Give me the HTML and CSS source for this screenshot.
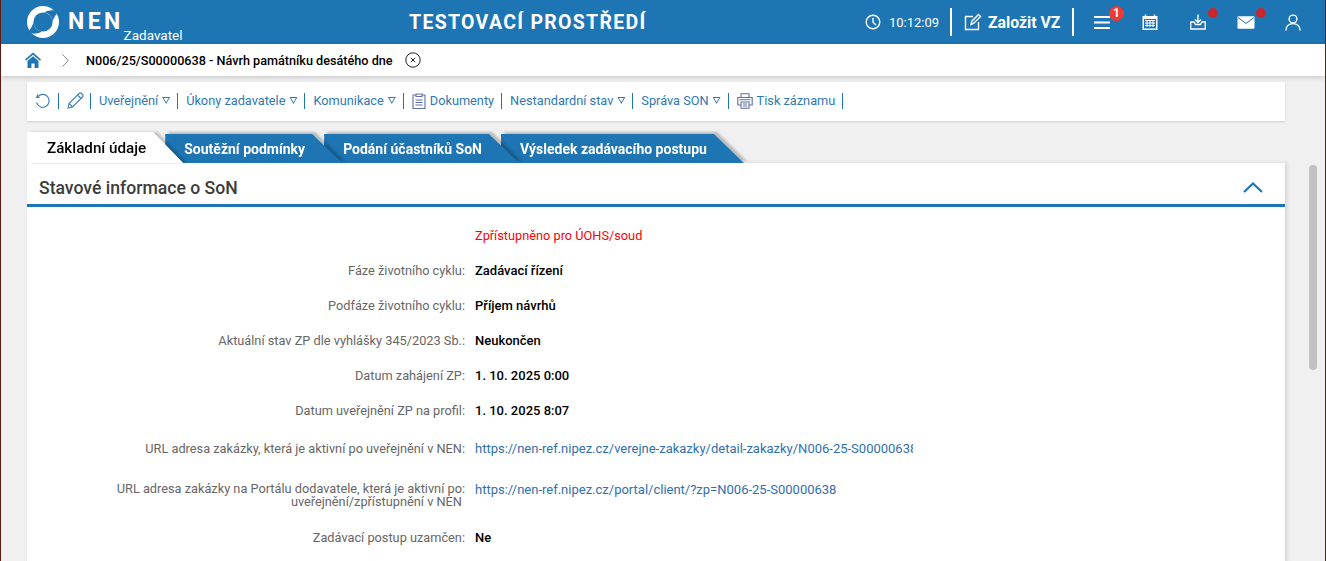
FILE: index.html
```html
<!DOCTYPE html>
<html lang="cs">
<head>
    <meta charset="utf-8"/>
    <title>NEN - Zadavatel</title>
    <link rel="stylesheet" href="styles.css">
</head>
<body>

<header class="top_bar">
    <div class="brand">
        <svg class="brand__logo" viewBox="0 0 32 32" width="32" height="32">
            <circle cx="16" cy="16" r="16" fill="#fff"/>
            <circle cx="16" cy="16" r="9.6" fill="#1e75b4"/>
            <path d="M31 6 C27 3.5 22 4 17 6.6 C22 7 25.6 11 25.4 16 C26.5 12 28.5 9 31 6Z" fill="#1e75b4"/>
            <path d="M1 26 C5 28.5 10 28 15 25.4 C10 25 6.4 21 6.6 16 C5.5 20 3.5 23 1 26Z" fill="#1e75b4"/>
        </svg>
        <span class="brand__name">NEN</span>
        <span class="brand__role">Zadavatel</span>
    </div>
    <div class="top_bar__title">TESTOVACÍ PROSTŘEDÍ</div>
    <div class="top_bar__right">
        <svg class="icon clock" viewBox="0 0 16 16" width="16" height="16"><circle cx="8" cy="8" r="6.8"/><path d="M8 3.8V8.2L11 11"/></svg>
        <span class="time">10:12:09</span>
        <span class="top_sep"></span>
        <svg class="icon create" viewBox="0 0 18 18" width="18" height="18"><path d="M9 3.5H1.5V16.5H14.5V9"/><path d="M7 11.5L7.8 8.2L14.5 1.5L16.5 3.5L9.8 10.2Z"/></svg>
        <span class="create_label">Založit VZ</span>
        <span class="top_sep top_sep--second"></span>
        <span class="menu_btn">
            <svg viewBox="0 0 16 13" width="16" height="13"><path d="M0 1H16M0 6.5H16M0 12H16" stroke="#fff" stroke-width="2"/></svg>
            <span class="badge">1</span>
        </span>
        <svg class="calendar" viewBox="0 0 16 16" width="16" height="16">
            <path d="M0.5 2H15.5V16H0.5Z" fill="#fff"/>
            <path d="M3.5 0.5V3M12.5 0.5V3" stroke="#fff" stroke-width="1.5"/>
            <path d="M2 5H14V14.5H2Z" fill="#1e75b4"/>
            <path d="M3 6.5H13M3 9H13M3 11.5H13M5 6V13M8 6V13M11 6V13" stroke="#fff" stroke-width="1"/>
        </svg>
        <span class="dot_btn dot_btn--inbox">
            <svg class="icon" viewBox="0 0 16 16" width="16" height="16"><path d="M8 0.5V8M5 5.5L8 8.5L11 5.5" stroke-width="1.4"/><path d="M4 8H0.8V15H15.2V8H12L10.5 10.5H5.5Z" stroke-width="1.3"/></svg>
            <span class="dot"></span>
        </span>
        <span class="dot_btn dot_btn--mail">
            <svg viewBox="0 0 18 13" width="18" height="13"><path d="M0.5 1.2C0.5 0.6 1 0.2 1.5 0.2H16.5C17 0.2 17.5 0.6 17.5 1.2V11.8C17.5 12.4 17 12.8 16.5 12.8H1.5C1 12.8 0.5 12.4 0.5 11.8Z" fill="#fff"/><path d="M1 1.5L9 7.5L17 1.5" fill="none" stroke="#1e75b4" stroke-width="1"/></svg>
            <span class="dot"></span>
        </span>
        <svg class="icon user" viewBox="0 0 16 17" width="16" height="17"><circle cx="8" cy="5" r="3.9"/><path d="M0.8 16.5C1.2 12 4 9.6 8 9.6C12 9.6 14.8 12 15.2 16.5"/></svg>
    </div>
</header>

<nav class="breadcrumb">
    <svg class="breadcrumb__home" viewBox="0 0 16 16" width="16" height="16">
        <path d="M8 0.5L0 7.6L1 8.8L8 2.8L15 8.8L16 7.6Z" fill="#1e75b4"/>
        <path d="M2.5 9L8 4.3L13.5 9V16H9.6V11.5H6.4V16H2.5Z" fill="#1e75b4"/>
    </svg>
    <svg class="breadcrumb__chevron" viewBox="0 0 7 13" width="7" height="13"><path d="M0.5 0.5L6.3 6.5L0.5 12.5" fill="none" stroke="#888" stroke-width="1"/></svg>
    <span class="breadcrumb__text">N006/25/S00000638 - Návrh památníku desátého dne</span>
    <svg class="breadcrumb__close" viewBox="0 0 16 16" width="16" height="16"><circle cx="8" cy="8" r="7.2" fill="none" stroke="#222" stroke-width="1"/><path d="M5.8 5.8L10.2 10.2M10.2 5.8L5.8 10.2" stroke="#222" stroke-width="1"/></svg>
</nav>

<div class="page">
    <div class="content">
        <div class="toolbar">
            <span class="toolbar__item">
                <svg class="tool_icon" viewBox="0 0 16 16" width="16" height="16"><path d="M2.6 4A6.4 6.4 0 1 1 1.6 9.5"/><path d="M0.8 4.4H4.6M2.4 1.2V4.6"/></svg>
            </span>
            <span class="toolbar__item toolbar__item--pen">
                <svg class="tool_icon" viewBox="0 0 17 17" width="17" height="17"><path d="M1 16L2 11.5L12 1.5C12.8 0.8 13.8 0.8 14.6 1.5L15.5 2.4C16.2 3.2 16.2 4.2 15.5 5L5.5 15Z"/><path d="M10.5 3L14 6.5M2 11.5L5.5 15"/></svg>
            </span>
            <span class="toolbar__item">Uveřejnění <i class="caret"></i></span>
            <span class="toolbar__item">Úkony zadavatele <i class="caret"></i></span>
            <span class="toolbar__item">Komunikace <i class="caret"></i></span>
            <span class="toolbar__item">
                <svg class="tool_icon tool_icon--doc" viewBox="0 0 14 16" width="14" height="16"><path d="M4 2H1V15.5H13V2H10"/><path d="M4 1H10V3.5H4ZM3.5 7H10.5M3.5 9.5H10.5M3.5 12H10.5"/></svg>
                Dokumenty
            </span>
            <span class="toolbar__item">Nestandardní stav <i class="caret"></i></span>
            <span class="toolbar__item">Správa SON <i class="caret"></i></span>
            <span class="toolbar__item">
                <svg class="tool_icon tool_icon--print" viewBox="0 0 16 16" width="16" height="16"><path d="M4 4V0.8H12V4M4 12H0.8V4.5H15.2V12H12"/><path d="M4 9H12V15.2H4ZM6 11H10M6 13H10M2.5 6.8H13.5"/></svg>
                Tisk záznamu
            </span>
        </div>

        <div class="tabs">
            <div class="tab tab--active"><span>Základní údaje</span></div>
            <div class="tab"><span>Soutěžní podmínky</span></div>
            <div class="tab"><span>Podání účastníků SoN</span></div>
            <div class="tab"><span>Výsledek zadávacího postupu</span></div>
        </div>

        <section class="panel">
            <div class="panel__head">
                <h2>Stavové informace o SoN</h2>
                <svg viewBox="0 0 20 11" width="20" height="11"><path d="M1 10L10 1.5L19 10" fill="none" stroke="#1e75b4" stroke-width="2.2"/></svg>
            </div>
            <div class="panel__status">Zpřístupněno pro ÚOHS/soud</div>
            <div class="row"><div class="row__label">Fáze životního cyklu</div><div class="row__value">Zadávací řízení</div></div>
            <div class="row"><div class="row__label">Podfáze životního cyklu</div><div class="row__value">Příjem návrhů</div></div>
            <div class="row"><div class="row__label">Aktuální stav ZP dle vyhlášky 345/2023 Sb.</div><div class="row__value">Neukončen</div></div>
            <div class="row"><div class="row__label">Datum zahájení ZP</div><div class="row__value">1. 10. 2025 0:00</div></div>
            <div class="row"><div class="row__label">Datum uveřejnění ZP na profil</div><div class="row__value">1. 10. 2025 8:07</div></div>
            <div class="row row--url"><div class="row__label">URL adresa zakázky, která je aktivní po uveřejnění v NEN</div><div class="row__value row__value--link">https://nen-ref.nipez.cz/verejne-zakazky/detail-zakazky/N006-25-S00000638</div></div>
            <div class="row row--wrap"><div class="row__label">URL adresa zakázky na Portálu dodavatele, která je aktivní po uveřejnění/zpřístupnění v NEN</div><div class="row__value row__value--link">https://nen-ref.nipez.cz/portal/client/?zp=N006-25-S00000638</div></div>
            <div class="row"><div class="row__label">Zadávací postup uzamčen</div><div class="row__value">Ne</div></div>
        </section>
    </div>
    <div class="scrollbar"><div class="scrollbar__thumb"></div></div>
</div>

</body>
</html>
```

FILE: styles.css
```css
html {
    height: 100%;
}

body {
    height: 561px;
    margin: 0;
    overflow: hidden;
    box-sizing: border-box;
    display: flex;
    flex-direction: column;
    background-color: #f0f0f0;
    border-left: 1px solid #5f1a14;
    border-right: 1px solid #5f1a14;
    font-family: Roboto, "Liberation Sans", sans-serif;
    font-size: 12.75px;
    color: #000;
}

/* top blue bar */
.top_bar {
    height: 44px;
    flex: none;
    display: flex;
    align-items: center;
    background-color: #1e75b4;
    color: #fff;
}

.brand {
    width: 408px;
    height: 44px;
    display: flex;
    align-items: flex-start;
}

.brand__logo {
    margin: 6px 0 0 26px;
}

.brand__name {
    margin: 9px 0 0 9px;
    font-size: 23px;
    line-height: 26px;
    font-weight: 700;
    letter-spacing: 3.4px;
}

.brand__role {
    margin: 27px 0 0 0;
    font-size: 13.5px;
    line-height: 17px;
}

.top_bar__title {
    font-size: 19.5px;
    font-weight: 700;
    letter-spacing: 1.3px;
}

.top_bar__right {
    margin-left: auto;
    height: 44px;
    display: flex;
    align-items: center;
}

.icon {
    fill: none;
    stroke: #fff;
    stroke-width: 1.4;
}

.clock {
    margin-right: 8px;
}

.time {
    width: 49px;
    font-size: 13px;
    white-space: nowrap;
}

.top_sep {
    width: 2px;
    height: 28px;
    margin: 0 12px;
    background-color: #fff;
}

.top_sep--second {
    margin: 0 20px 0 12px;
}

.create_label {
    width: 72px;
    margin-left: 6px;
    font-size: 15.8px;
    font-weight: 700;
    white-space: nowrap;
}

.menu_btn {
    position: relative;
    display: flex;
}

.badge {
    position: absolute;
    top: -10px;
    left: 15px;
    width: 15px;
    height: 15px;
    border-radius: 50%;
    background-color: #ee3a32;
    font-size: 12px;
    font-weight: 700;
    line-height: 15px;
    text-align: center;
}

.calendar {
    margin-left: 32px;
}

.dot_btn {
    position: relative;
    display: flex;
}

.dot_btn--inbox {
    margin-left: 32px;
}

.dot_btn--mail {
    margin-left: 31px;
}

.dot {
    position: absolute;
    top: -6px;
    left: 18px;
    width: 10px;
    height: 10px;
    border-radius: 50%;
    background-color: #c8282c;
}

.dot_btn--mail .dot {
    top: -8px;
    left: 19px;
}

.user {
    margin: 0 24px 0 30px;
}

/* breadcrumb */
.breadcrumb {
    position: relative;
    height: 32px;
    flex: none;
    display: flex;
    align-items: center;
    background-color: #fff;
    box-shadow: 0 1px 5px rgba(0, 0, 0, .2);
}

.breadcrumb__home {
    margin-left: 24px;
}

.breadcrumb__chevron {
    margin-left: 21px;
}

.breadcrumb__text {
    margin-left: 17px;
    font-size: 12.65px;
    font-weight: 500;
}

.breadcrumb__close {
    margin-left: 12px;
}

/* page */
.page {
    flex: 1;
    display: flex;
    min-height: 0;
}

.content {
    width: 1258px;
    margin-left: 26px;
    flex: none;
}

.scrollbar {
    margin-left: 24px;
    padding-top: 89px;
}

.scrollbar__thumb {
    width: 8px;
    height: 205px;
    border-radius: 4px;
    background-color: #c1c1c1;
}

/* toolbar */
.toolbar {
    box-sizing: border-box;
    height: 39px;
    margin-top: 6px;
    padding-bottom: 2px;
    display: flex;
    align-items: center;
    background-color: #fff;
    box-shadow: 0 1px 2px rgba(0, 0, 0, .15);
    color: #2f78b4;
}

.toolbar__item {
    height: 16px;
    display: flex;
    align-items: center;
    gap: 4px;
    padding: 0 7px 0 8px;
    border-right: 1px solid #1e75b4;
    white-space: nowrap;
}

.toolbar__item--pen {
    padding-right: 6px;
}

.tool_icon {
    fill: none;
    stroke: #3d7fb8;
    stroke-width: 1.1;
}

.tool_icon--doc,
.tool_icon--print {
    stroke: #5f6fa8;
}

.caret {
    width: 8px;
    height: 7px;
    background-color: #2f78b4;
    clip-path: polygon(0 0, 100% 0, 50% 100%, 0 0, 1.5px 1px, 50% 75%, calc(100% - 1.5px) 1px, 1.5px 1px);
}

/* tabs */
.tabs {
    height: 31px;
    margin-top: 11px;
    display: flex;
}

.tab {
    position: relative;
    height: 29px;
    margin-top: 2px;
    margin-left: -18px;
    padding: 0 37px 0 19px;
    display: flex;
    align-items: center;
    font-size: 14px;
    font-weight: 700;
    color: #fff;
    filter: drop-shadow(3px -2px 1px rgba(0, 0, 0, .22));
}

.tab::before {
    content: "";
    position: absolute;
    top: 0;
    right: 0;
    bottom: 0;
    left: 0;
    background-color: #1e75b4;
    clip-path: polygon(0 0, calc(100% - 30px) 0, 100% 100%, 0 100%);
}

.tab span {
    position: relative;
}

.tab:nth-child(1) { z-index: 4; }
.tab:nth-child(2) { z-index: 3; }
.tab:nth-child(3) { z-index: 2; }
.tab:nth-child(4) { z-index: 1; }

.tab--active {
    height: 31px;
    margin-top: 0;
    margin-left: 0;
    padding-left: 20px;
    font-size: 15.2px;
    font-weight: 500;
    color: #000;
    filter: drop-shadow(4px 0 1px rgba(0, 0, 0, .2));
}

.tab--active::before {
    background-color: #fff;
}

/* panel */
.panel {
    height: 400px;
    background-color: #fff;
    box-shadow: 2px 0 4px rgba(0, 0, 0, .12);
}

.panel__head {
    box-sizing: border-box;
    height: 44px;
    padding: 8px 22px 0 12px;
    display: flex;
    align-items: center;
    justify-content: space-between;
    border-bottom: 3px solid #1e75b4;
}

.panel__head h2 {
    margin: 0;
    font-size: 17.6px;
    font-weight: 500;
    color: #3c3c3c;
}

.panel__status {
    margin: 21px 0 20px 448px;
    line-height: 15px;
    color: #f00;
}

.row {
    display: flex;
    line-height: 15px;
    margin-bottom: 20px;
}

.row__label {
    width: 438px;
    flex: none;
    display: flex;
    justify-content: flex-end;
    text-align: right;
    color: #666;
}

.row__label::after {
    content: ":";
    flex: none;
}

.row__value {
    width: 438px;
    margin-left: 10px;
    overflow: hidden;
    white-space: nowrap;
    font-size: 13px;
    font-weight: 500;
}

.row__value--link {
    font-weight: 400;
    color: #2f6fb0;
}

.row--url {
    margin-top: 23px;
    margin-bottom: 26px;
}

.row--wrap {
    margin-bottom: 22px;
}

.row--wrap .row__label {
    line-height: 13px;
}
```
